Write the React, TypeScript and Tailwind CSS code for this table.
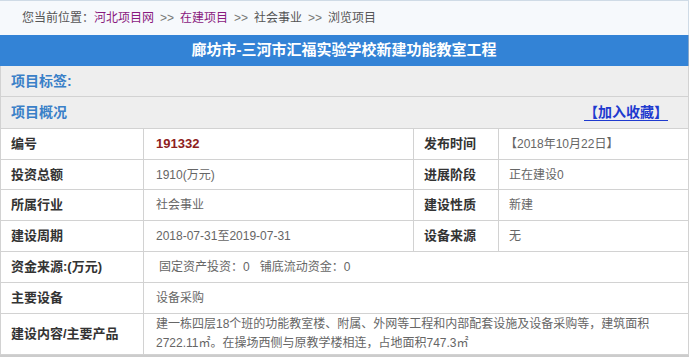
import React from "react";

const font = { fontFamily: '"Liberation Sans", "Noto Sans CJK SC", sans-serif' };

function Label({ children }: { children: React.ReactNode }) {
  return (
    <td className="border border-[#d2d2d2] pl-[10px] text-[13px] font-bold text-[#333] leading-[16px] align-middle">
      {children}
    </td>
  );
}

function Val({ children, colSpan, className = "" }: { children: React.ReactNode; colSpan?: number; className?: string }) {
  return (
    <td colSpan={colSpan} className={`border border-[#d2d2d2] pl-[12px] text-[12px] text-[#666] leading-[16px] align-middle ${className}`}>
      {children}
    </td>
  );
}

export default function App() {
  return (
    <div className="w-[692px] h-[358px] bg-white overflow-hidden" style={font}>
      <div className="w-[689px]">
        <div className="h-[35px] bg-[#f6f9fc] border-t border-r border-[#cfdbe6] flex items-center pl-[22px] text-[12px] text-[#555]">
          <span>您当前位置：</span>
          <span className="text-[#8a1a7e]">河北项目网</span>
          <span className="mx-[6px] text-[#777]">&gt;&gt;</span>
          <span className="text-[#8a1a7e]">在建项目</span>
          <span className="mx-[6px] text-[#777]">&gt;&gt;</span>
          <span>社会事业</span>
          <span className="mx-[6px] text-[#777]">&gt;&gt;</span>
          <span>浏览项目</span>
        </div>
        <div className="h-[31px] bg-[#3383d6] flex items-center justify-center text-white text-[15px] font-bold border-r border-[#8aa8c8]">
          廊坊市-三河市汇福实验学校新建功能教室工程
        </div>
        <div className="h-[31px] bg-[#eeeeee] border-l border-r border-b border-[#d2d2d2] flex items-center pl-[10px] text-[14px] font-bold text-[#3a80c8]">
          项目标签:
        </div>
        <div className="h-[31px] bg-[#eeeeee] border-l border-r border-b-0 border-[#d2d2d2] flex items-center justify-between pl-[10px] pr-[20px] text-[14px] font-bold">
          <span className="text-[#3a80c8]">项目概况</span>
          <span className="text-[#1e3acf] underline underline-offset-[3px]">【加入收藏】</span>
        </div>
        <table className="w-[689px] border-collapse table-fixed">
          <colgroup>
            <col className="w-[143px]" />
            <col className="w-[270px]" />
            <col className="w-[85px]" />
            <col />
          </colgroup>
          <tbody>
            <tr className="h-[31px]">
              <Label>编号</Label>
              <Val className="!text-[#8e2020] font-bold !text-[13px]">191332</Val>
              <Label>发布时间</Label>
              <Val className="!pl-[6px]">【2018年10月22日】</Val>
            </tr>
            <tr className="h-[30px]">
              <Label>投资总额</Label>
              <Val>1910(万元)</Val>
              <Label>进展阶段</Label>
              <Val className="!pl-[10px]">正在建设0</Val>
            </tr>
            <tr className="h-[31px]">
              <Label>所属行业</Label>
              <Val>社会事业</Val>
              <Label>建设性质</Label>
              <Val className="!pl-[10px]">新建</Val>
            </tr>
            <tr className="h-[31px]">
              <Label>建设周期</Label>
              <Val>2018-07-31至2019-07-31</Val>
              <Label>设备来源</Label>
              <Val className="!pl-[10px]">无</Val>
            </tr>
            <tr className="h-[31px]">
              <Label>资金来源:(万元)</Label>
              <Val colSpan={3} className="!pl-[15px]">
                固定资产投资：0&nbsp;&nbsp;&nbsp;铺底流动资金：0
              </Val>
            </tr>
            <tr className="h-[31px]">
              <Label>主要设备</Label>
              <Val colSpan={3}>设备采购</Val>
            </tr>
            <tr className="h-[41px]">
              <Label>建设内容/主要产品</Label>
              <Val colSpan={3} className="!leading-[19px]">
                建一栋四层18个班的功能教室楼、附属、外网等工程和内部配套设施及设备采购等，建筑面积
                <br />
                2722.11㎡。在操场西侧与原教学楼相连，占地面积747.3㎡
              </Val>
            </tr>
          </tbody>
        </table>
        <div className="h-[2px] bg-[#cccccc]" />
      </div>
    </div>
  );
}
